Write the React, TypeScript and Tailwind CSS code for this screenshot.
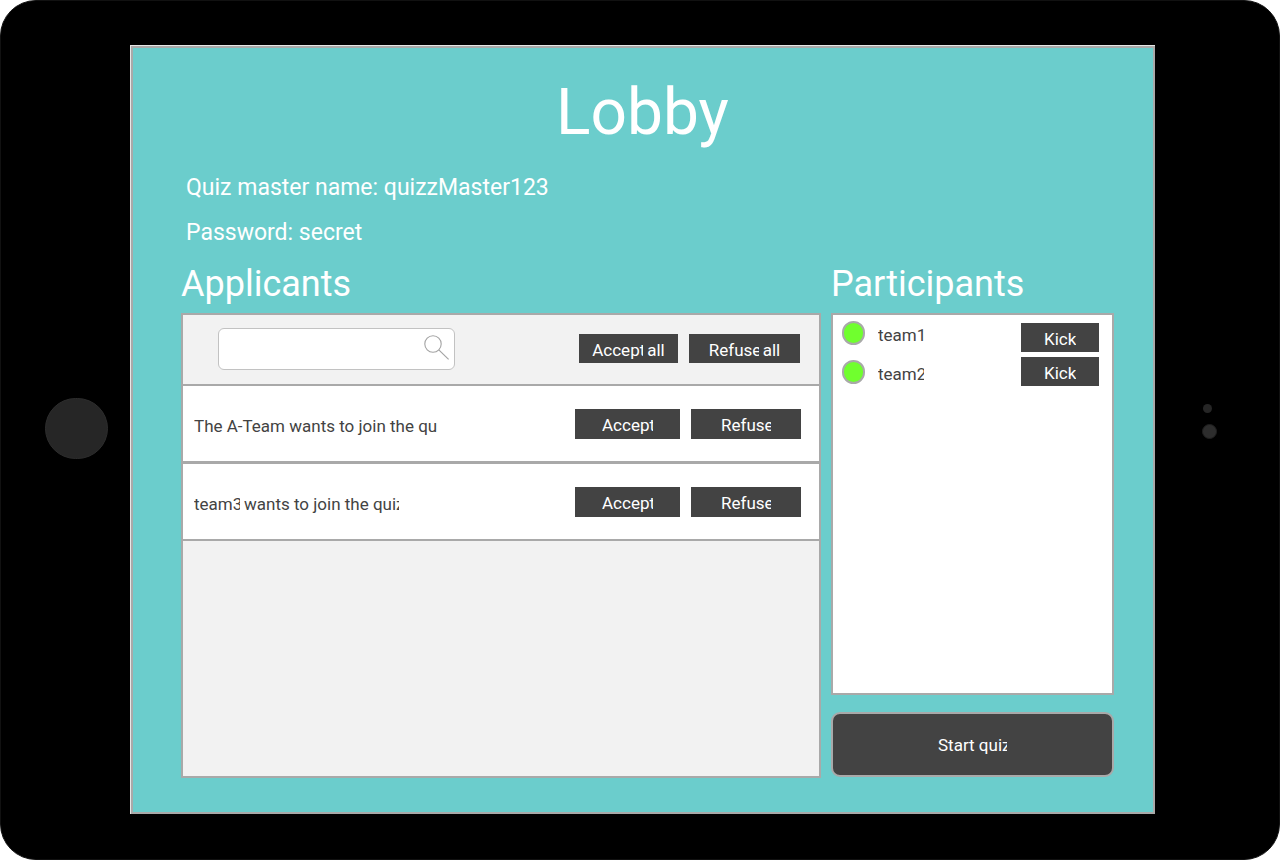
import type { ReactNode } from "react";

function Clip({ width, children }: { width: string; children: ReactNode }) {
  return <span className={`block overflow-hidden whitespace-nowrap ${width}`}>{children}</span>;
}

function DarkButton({ size, children }: { size: string; children: ReactNode }) {
  return (
    <button
      type="button"
      className={`flex shrink-0 items-center justify-center gap-1 bg-[#434343] pt-0.5 text-white ${size}`}
    >
      {children}
    </button>
  );
}

function ApplicantRow({ border, children }: { border: string; children: ReactNode }) {
  return (
    <li className={`box-content flex h-[75px] items-center gap-[11px] border-[#a9a9a9] bg-white pr-[18px] pl-[11px] ${border}`}>
      <p className="flex flex-1 gap-1 pt-1 text-[#434343]">{children}</p>
      <DarkButton size="h-[30px] w-[105px]">
        <Clip width="w-[51px]">Accept</Clip>
      </DarkButton>
      <DarkButton size="h-[30px] w-[110px]">
        <Clip width="w-[50px]">Refuse</Clip>
      </DarkButton>
    </li>
  );
}

function Participant({ name }: { name: string }) {
  return (
    <li className="flex h-[39px] items-center gap-[13px] pb-1">
      <span className="h-6 w-[23px] rounded-full border-2 border-[#a9a9a9] bg-[#70ff2e]" />
      <span className="pt-1 text-[#434343]">
        <Clip width="w-[46px]">{name}</Clip>
      </span>
    </li>
  );
}

export default function App() {
  return (
    <div className="min-h-screen bg-white pb-px font-['Roboto',sans-serif] text-[17px] leading-5">
      <div className="flex min-h-[calc(100vh-1px)] rounded-[36px] border border-[#111111] bg-black pt-11 pb-[45px]">
        <div className="flex w-[129px] shrink-0 items-center pb-0.5 pl-11">
          <button type="button" aria-label="Home" className="h-[61px] w-[63px] rounded-full border border-[#2d2d2d] bg-[#262626]" />
        </div>

        <div className="flex min-w-0 flex-1 border-t border-l border-[#e6e6e6]">
          <main className="flex min-w-0 flex-1 flex-col border-2 border-[#a9a9a9] bg-[#6bcdcc] pt-[33px] pr-[39px] pb-[34px] pl-12 text-white">
            <h1 className="pr-2.5 text-center text-[64px] leading-[64px]">Lobby</h1>
            <div className="mt-5 pl-[5px] text-[23px] leading-[45px]">
              <p>Quiz master name: quizzMaster123</p>
              <p>Password: secret</p>
            </div>

            <div className="flex flex-1 gap-[10px]">
              <section className="flex min-w-0 flex-1 flex-col">
                <h2 className="text-[36px] leading-[58px]">Applicants</h2>
                <div className="flex-1 border-2 border-[#a9a9a9] bg-[#f2f2f2]">
                  <div className="flex h-[71px] items-center border-b-2 border-[#a9a9a9] pr-[19px] pb-0.5 pl-[35px]">
                    <label className="flex h-[42px] w-[237px] items-center rounded-md border border-[#c2c2c2] bg-white pr-1">
                      <input type="search" aria-label="Search applicants" className="h-full min-w-0 flex-1 bg-transparent px-2 text-[#434343] outline-none" />
                      <svg width="26" height="26" viewBox="0 0 26 26" fill="none" stroke="#a3a3a3" strokeWidth="1.1" className="mb-0.5 shrink-0">
                        <circle cx="9" cy="9" r="8.2" />
                        <path d="M14.8 14.8 24.6 24.4" />
                      </svg>
                    </label>
                    <div className="ml-auto flex gap-[11px]">
                      <DarkButton size="h-[29px] w-[99px]">
                        <Clip width="w-[51px]">Accept</Clip>
                        <span>all</span>
                      </DarkButton>
                      <DarkButton size="h-[29px] w-[111px]">
                        <Clip width="w-[50px]">Refuse</Clip>
                        <span>all</span>
                      </DarkButton>
                    </div>
                  </div>
                  <ul>
                    <ApplicantRow border="border-b-3">
                      <Clip width="w-[244px]">The A-Team wants to join the quiz</Clip>
                    </ApplicantRow>
                    <ApplicantRow border="border-b-2">
                      <Clip width="w-[46px]">team3</Clip>
                      <Clip width="w-[155px]">wants to join the quiz</Clip>
                    </ApplicantRow>
                  </ul>
                </div>
              </section>

              <section className="flex w-[283px] shrink-0 flex-col pb-px">
                <h2 className="text-[36px] leading-[58px]">Participants</h2>
                <div className="flex flex-1 justify-between border-2 border-[#a9a9a9] bg-white pr-[13px] pl-[9px]">
                  <ul>
                    <Participant name="team1" />
                    <Participant name="team2" />
                  </ul>
                  <div className="flex flex-col gap-[5px] pt-2">
                    <DarkButton size="h-[29px] w-[78px]">
                      <Clip width="w-[32px]">Kick</Clip>
                    </DarkButton>
                    <DarkButton size="h-[29px] w-[78px]">
                      <Clip width="w-[32px]">Kick</Clip>
                    </DarkButton>
                  </div>
                </div>
                <button type="button" className="mt-[17px] flex h-[65px] items-center justify-center rounded-[9px] border-2 border-[#a9a9a9] bg-[#434343] text-white">
                  <Clip width="w-[69px]">Start quiz</Clip>
                </button>
              </section>
            </div>
          </main>
        </div>

        <div className="flex w-[124px] shrink-0 flex-col justify-center gap-[11px] pb-4 pl-[47px]">
          <span className="ml-px size-[9px] rounded-full bg-[#262626]" />
          <span className="size-[15px] rounded-full border border-[#1f1f1f] bg-[#2d2d2d]" />
        </div>
      </div>
    </div>
  );
}
